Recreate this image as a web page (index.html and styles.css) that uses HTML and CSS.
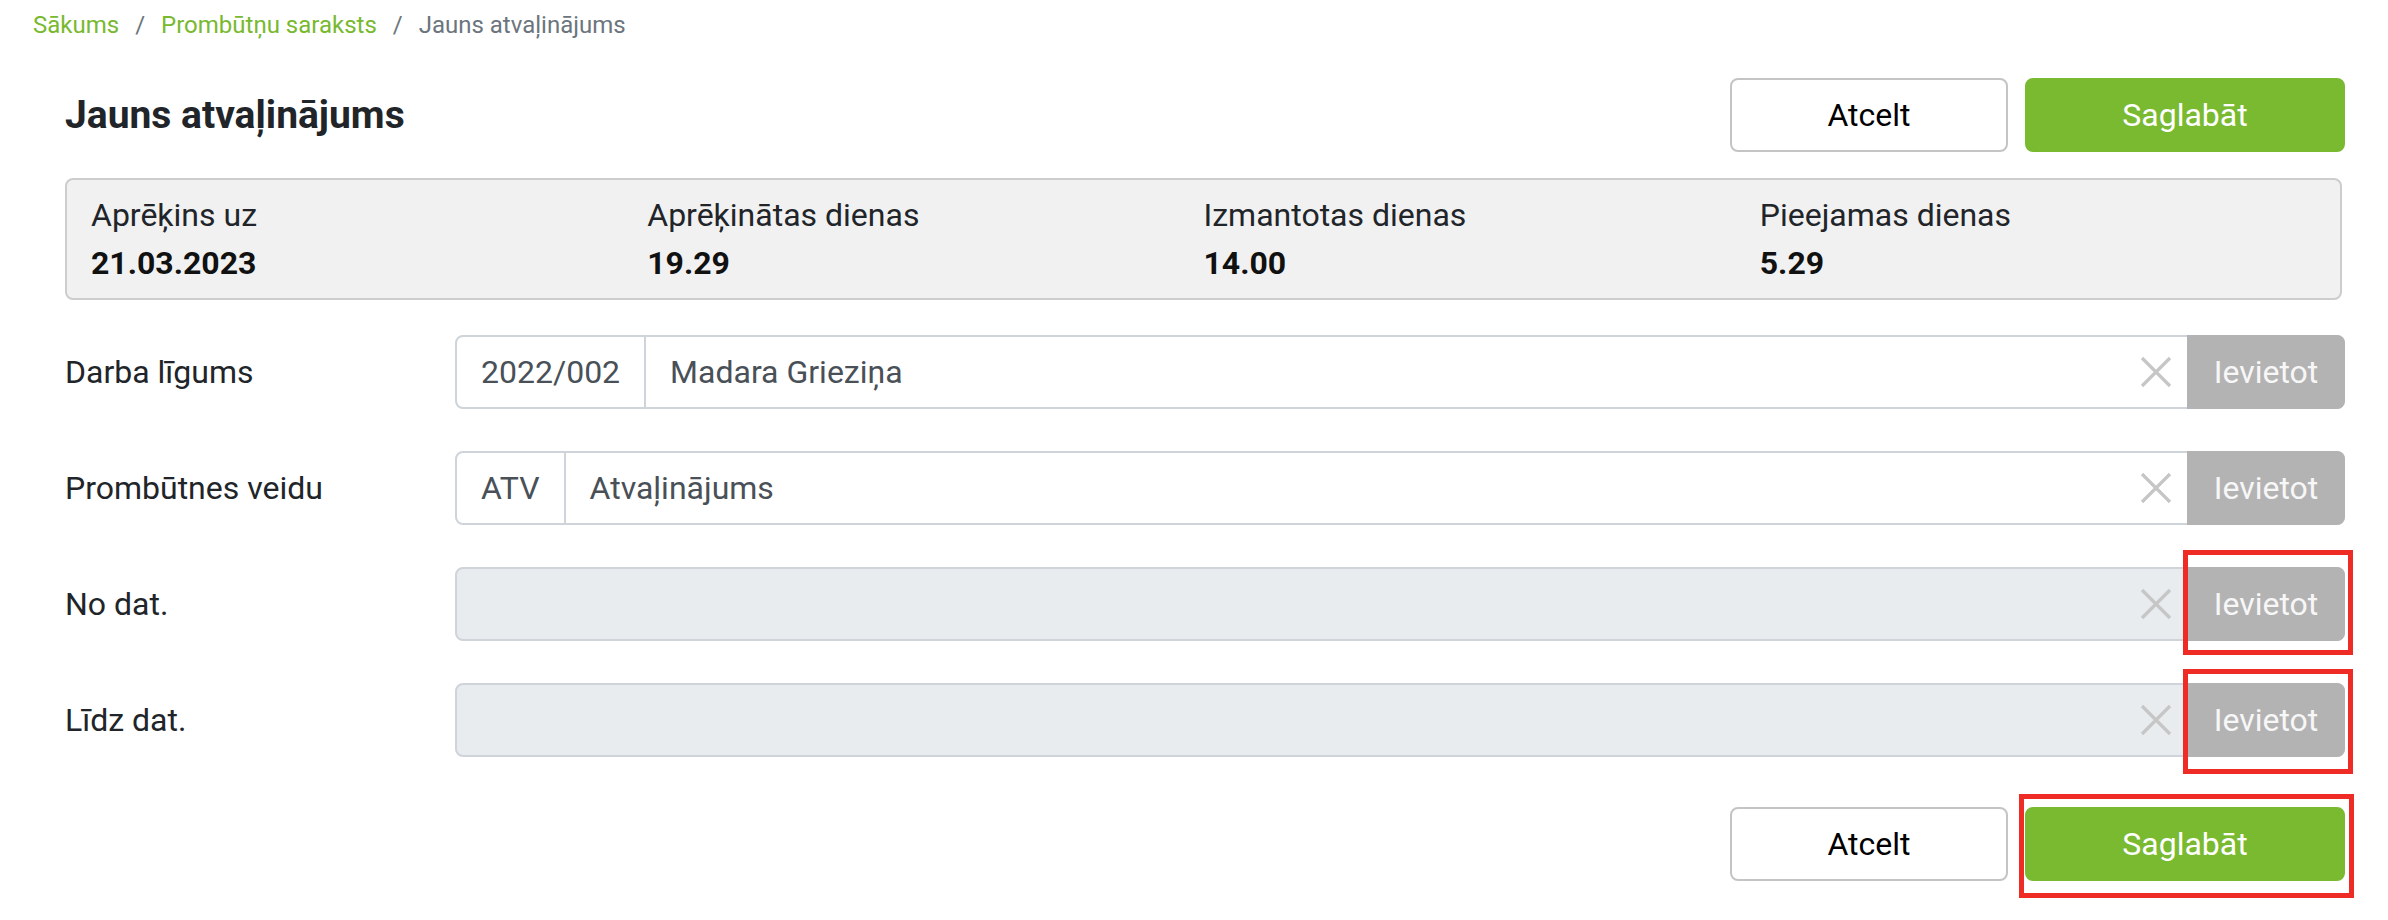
FILE: index.html
```html
<!DOCTYPE html>
<html lang="lv">
<head>
<meta charset="utf-8">
<title>Jauns atvaļinājums</title>
<link rel="stylesheet" href="styles.css">
</head>
<body>
<nav class="breadcrumb">
  <a class="crumb-link" href="#">Sākums</a><span class="sep">/</span><a class="crumb-link" href="#">Prombūtņu saraksts</a><span class="sep">/</span><span class="crumb-current">Jauns atvaļinājums</span>
</nav>
<main class="page">
  <div class="header">
    <h1 class="title">Jauns atvaļinājums</h1>
    <div class="actions">
      <button class="btn btn-outline">Atcelt</button>
      <button class="btn btn-primary">Saglabāt</button>
    </div>
  </div>

  <section class="summary">
    <div class="stat"><div class="stat-label">Aprēķins uz</div><div class="stat-value">21.03.2023</div></div>
    <div class="stat"><div class="stat-label">Aprēķinātas dienas</div><div class="stat-value">19.29</div></div>
    <div class="stat"><div class="stat-label">Izmantotas dienas</div><div class="stat-value">14.00</div></div>
    <div class="stat"><div class="stat-label">Pieejamas dienas</div><div class="stat-value">5.29</div></div>
  </section>

  <section class="form">
    <div class="row">
      <label class="row-label">Darba līgums</label>
      <div class="field">
        <span class="prefix">2022/002</span>
        <span class="value">Madara Grieziņa</span>
        <span class="clear"><svg viewBox="0 0 32 32" width="32" height="32"><path d="M2 2 L30 30 M30 2 L2 30" stroke="#c6c6c6" stroke-width="3.2" fill="none"/></svg></span>
        <span class="insert">Ievietot</span>
      </div>
    </div>
    <div class="row">
      <label class="row-label">Prombūtnes veidu</label>
      <div class="field">
        <span class="prefix">ATV</span>
        <span class="value">Atvaļinājums</span>
        <span class="clear"><svg viewBox="0 0 32 32" width="32" height="32"><path d="M2 2 L30 30 M30 2 L2 30" stroke="#c6c6c6" stroke-width="3.2" fill="none"/></svg></span>
        <span class="insert">Ievietot</span>
      </div>
    </div>
    <div class="row">
      <label class="row-label">No dat.</label>
      <div class="field field-disabled">
        <span class="value"></span>
        <span class="clear"><svg viewBox="0 0 32 32" width="32" height="32"><path d="M2 2 L30 30 M30 2 L2 30" stroke="#c6c6c6" stroke-width="3.2" fill="none"/></svg></span>
        <span class="insert marked">Ievietot</span>
      </div>
    </div>
    <div class="row">
      <label class="row-label">Līdz dat.</label>
      <div class="field field-disabled">
        <span class="value"></span>
        <span class="clear"><svg viewBox="0 0 32 32" width="32" height="32"><path d="M2 2 L30 30 M30 2 L2 30" stroke="#c6c6c6" stroke-width="3.2" fill="none"/></svg></span>
        <span class="insert marked marked-low">Ievietot</span>
      </div>
    </div>
  </section>

  <div class="footer">
    <button class="btn btn-outline">Atcelt</button>
    <div class="save-wrap"><button class="btn btn-primary">Saglabāt</button></div>
  </div>
</main>
</body>
</html>
```

FILE: styles.css
```css
*, *::before, *::after { box-sizing: border-box; }

html, body {
  height: 100%;
}

body {
  margin: 0;
  background: #ffffff;
  font-family: Roboto, "Liberation Sans", sans-serif;
  color: #212529;
  font-size: 32px;
  line-height: 48px;
  overflow: hidden;
}

.breadcrumb {
  display: flex;
  align-items: center;
  padding: 7px 0 0 33px;
  font-size: 24px;
  line-height: 36px;
}

.crumb-link {
  color: #78b92f;
  text-decoration: none;
}

.sep {
  color: #6c757d;
  padding: 0 16px;
}

.crumb-current {
  color: #6c757d;
}

.page {
  padding: 35px 43px 0 65px;
}

.header {
  display: flex;
  align-items: center;
  justify-content: space-between;
}

.title {
  margin: 0;
  font-size: 39px;
  font-weight: 700;
  line-height: 48px;
  color: #212529;
}

.actions,
.footer {
  display: flex;
  align-items: flex-start;
  gap: 17px;
}

.btn {
  display: block;
  height: 74px;
  font-family: Roboto, "Liberation Sans", sans-serif;
  font-size: 32px;
  line-height: 48px;
  padding: 11px 0;
  border-radius: 8px;
  border: 2px solid #c4c4c4;
  cursor: pointer;
}

.btn-outline {
  width: 278px;
  background: #ffffff;
  color: #000000;
}

.btn-primary {
  width: 320px;
  background: #79ba31;
  border-color: #79ba31;
  color: #ffffff;
}

.summary {
  margin: 26px 3px 0 0;
  display: grid;
  grid-template-columns: repeat(4, 1fr);
  padding: 11px 24px;
  background: #f1f1f1;
  border: 2px solid #cdcdcd;
  border-radius: 8px;
}

.stat-label {
  color: #212529;
}

.stat-value {
  font-weight: 700;
  color: #111111;
}

.form {
  margin-top: 35px;
  display: flex;
  flex-direction: column;
  gap: 42px;
}

.row {
  display: grid;
  grid-template-columns: 390px 1fr;
  align-items: center;
}

.row-label {
  color: #212529;
}

.field {
  display: flex;
  align-items: stretch;
  height: 74px;
  border: 2px solid #ced4da;
  border-radius: 8px;
  background: #ffffff;
  color: #495057;
}

.field-disabled {
  background: #e9ecef;
}

.prefix {
  display: flex;
  align-items: center;
  padding: 0 24px;
  border-right: 2px solid #ced4da;
}

.value {
  flex: 1;
  display: flex;
  align-items: center;
  padding: 0 24px;
}

.clear {
  display: flex;
  align-items: center;
  padding: 0 15px 0 16px;
}

.clear svg {
  display: block;
}

.insert {
  position: relative;
  display: flex;
  align-items: center;
  justify-content: center;
  width: 158px;
  margin: -2px -2px -2px 0;
  background: #b3b3b3;
  color: #f7f7f7;
  border-radius: 0 8px 8px 0;
}

.marked::after {
  content: "";
  position: absolute;
  top: -17px;
  bottom: -14px;
  left: -4px;
  right: -8px;
  border: 5px solid #ee2b24;
}

.marked-low::after {
  top: -14px;
  bottom: -17px;
}

.footer {
  justify-content: flex-end;
  margin-top: 50px;
}

.save-wrap {
  position: relative;
  height: 74px;
}

.save-wrap::after {
  content: "";
  position: absolute;
  top: -13px;
  left: -6px;
  width: 335px;
  height: 104px;
  border: 5px solid #ee2b24;
  pointer-events: none;
}
```
